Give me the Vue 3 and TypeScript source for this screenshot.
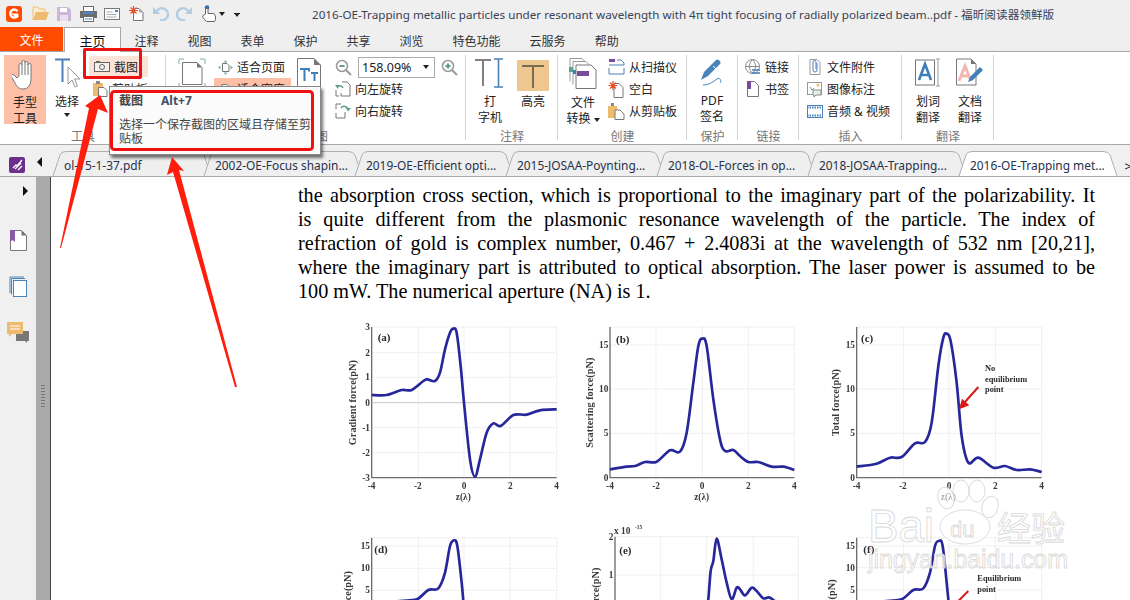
<script setup lang="ts">
type Pt = [number, number]
interface Chart {
  left: number; right: number; top: number; bottom: number
  grid: number[]; hgrid: number[]
  xt: { t: string; x: number }[]; yt: { t: string; y: number }[]
  curve: Pt[]; letter: string; lx: number; ly: number
  yl: string; ylx: number; yly: number; anchor: string
  xl?: { t: string; x: number }
}

function smooth(p: Pt[]): string {
  let d = `M${p[0][0]} ${p[0][1]}`
  for (let i = 0; i < p.length - 1; i++) {
    const a = p[Math.max(i - 1, 0)], b = p[i], c = p[i + 1], e = p[Math.min(i + 2, p.length - 1)]
    const k = 6
    d += ` C${(b[0] + (c[0] - a[0]) / k).toFixed(1)} ${(b[1] + (c[1] - a[1]) / k).toFixed(1)} ${(c[0] - (e[0] - b[0]) / k).toFixed(1)} ${(c[1] - (e[1] - b[1]) / k).toFixed(1)} ${c[0]} ${c[1]}`
  }
  return d
}
const D = 1170
const sh = (p: Pt[]): Pt[] => p.map(([x, y]) => [x + D, y] as Pt)
const xt4 = (l: number, r: number) => {
  const s = (r - l) / 4
  return ['-4', '-2', '0', '2', '4'].map((t, i) => ({ t, x: l + s * i }))
}
const charts: Chart[] = [
  {
    left: 95, right: 650, top: 33, bottom: 485, grid: [235, 372, 510], hgrid: [110, 184, 335, 410],
    xt: xt4(95, 650), yt: [['3', 33], ['2', 110], ['1', 184], ['0', 260], ['-1', 335], ['-2', 410], ['-3', 485]].map(([t, y]) => ({ t: t as string, y: y as number })),
    curve: [[95, 237], [140, 237], [185, 222], [215, 222], [250, 195], [262, 190], [285, 195], [300, 170], [315, 100], [330, 50], [340, 38], [350, 50], [362, 150], [372, 260], [390, 430], [405, 482], [420, 430], [440, 350], [460, 322], [482, 330], [520, 297], [560, 296], [600, 283], [650, 280]],
    letter: '(a)', lx: 113, ly: 76, yl: 'Gradient force(pN)', ylx: 48, yly: 260, anchor: 'middle', xl: { t: 'z(λ)', x: 370 }
  },
  {
    left: 810, right: 1363, top: 33, bottom: 485, grid: [948, 1087, 1225], hgrid: [87, 219, 352],
    xt: xt4(810, 1363), yt: [['15', 87], ['10', 219], ['5', 352], ['0', 485]].map(([t, y]) => ({ t: t as string, y: y as number })),
    curve: [[810, 460], [860, 452], [885, 450], [915, 438], [950, 437], [990, 403], [1020, 407], [1040, 350], [1060, 200], [1075, 90], [1087, 68], [1100, 90], [1120, 250], [1140, 370], [1155, 405], [1180, 402], [1200, 420], [1225, 438], [1255, 438], [1295, 452], [1330, 452], [1363, 462]],
    letter: '(b)', lx: 828, ly: 82, yl: 'Scattering force(pN)', ylx: 760, yly: 260, anchor: 'middle', xl: { t: 'z(λ)', x: 1085 }
  },
  {
    left: 380 + D, right: 935 + D, top: 33, bottom: 485, grid: [520 + D, 657 + D, 796 + D], hgrid: [87, 219, 352],
    xt: xt4(380 + D, 935 + D), yt: [['15', 87], ['10', 219], ['5', 352], ['0', 485]].map(([t, y]) => ({ t: t as string, y: y as number })),
    curve: sh([[380, 452], [440, 443], [480, 425], [515, 423], [555, 382], [585, 378], [605, 320], [625, 150], [640, 65], [650, 53], [662, 75], [680, 200], [695, 360], [715, 440], [745, 425], [790, 455], [825, 450], [860, 462], [900, 460], [935, 468]]),
    letter: '(c)', lx: 393 + D, ly: 78, yl: 'Total force(pN)', ylx: 327 + D, yly: 260, anchor: 'middle', xl: { t: 'z(λ)', x: 655 + D }
  },
  {
    left: 95, right: 650, top: 665, bottom: 1000, grid: [235, 372, 510], hgrid: [690, 757, 823],
    xt: [], yt: [['15', 690], ['10', 757], ['5', 823]].map(([t, y]) => ({ t: t as string, y: y as number })),
    curve: [[95, 862], [180, 855], [230, 850], [265, 822], [295, 817], [315, 770], [330, 690], [342, 673], [352, 690], [365, 800], [372, 880]],
    letter: '(d)', lx: 103, ly: 712, yl: 'force(pN)', ylx: 32, yly: 765, anchor: 'end'
  },
  {
    left: 825, right: 205 + D, top: 662, bottom: 1000, grid: [962, 1100, 70 + D], hgrid: [777],
    xt: [], yt: [['2', 662], ['1', 777]].map(([t, y]) => ({ t: t as string, y: y as number })),
    curve: [[1100, 880], [1105, 850], [1112, 765], [1120, 735], [1130, 668], [1145, 730], [1160, 800], [1175, 850], [1190, 815], [1200, 820], [1215, 838], [1235, 815], [1250, 825], [1270, 847], [1290, 845], [1320, 870]],
    letter: '(e)', lx: 838, ly: 714, yl: 'force(pN)', ylx: 778, yly: 755, anchor: 'end'
  },
  {
    left: 380 + D, right: 935 + D, top: 665, bottom: 1000, grid: [520 + D, 657 + D, 796 + D], hgrid: [690, 755, 822],
    xt: [], yt: [['15', 690], ['10', 755], ['5', 822]].map(([t, y]) => ({ t: t as string, y: y as number })),
    curve: sh([[380, 862], [470, 855], [515, 850], [550, 822], [580, 817], [600, 770], [615, 690], [627, 675], [638, 690], [652, 820], [658, 880]]),
    letter: '(f)', lx: 400 + D, ly: 712, yl: 'force(pN)', ylx: 315 + D, yly: 790, anchor: 'end'
  }
]
const curves = charts.map(c => smooth(c.curve))

const menus = ['注释', '视图', '表单', '保护', '共享', '浏览', '特色功能', '云服务', '帮助']
const tabs = [
  'ol-15-1-37.pdf', '2002-OE-Focus shapin...', '2019-OE-Efficient opti...', '2015-JOSAA-Poynting...',
  '2018-OL-Forces in op...', '2018-JOSAA-Trapping...', '2016-OE-Trapping met...'
]
const lines = [
  'the absorption cross section, which is proportional to the imaginary part of the polarizability. It',
  'is quite different from the plasmonic resonance wavelength of the particle. The index of',
  'refraction of gold is complex number, 0.467 + 2.4083i at the wavelength of 532 nm [20,21],',
  'where the imaginary part is attributed to optical absorption. The laser power is assumed to be',
  '100 mW. The numerical aperture (NA) is 1.'
]
</script>

<template>
  <div class="app">
    <header class="titlebar">
      <div class="quick">
        <svg class="q" style="margin-left:6px" width="16" height="16" viewBox="0 0 16 16"><rect width="16" height="16" rx="3" fill="#ff4a00"/><path d="M11.5 5.2A4 4 0 1 0 11 10.5L8.5 8.6h4" fill="none" stroke="#fff" stroke-width="2.4"/></svg>
        <svg class="q" style="margin-left:10px" width="17" height="15" viewBox="0 0 17 15"><path d="M1 14V1h5l1.500 2H13v3" fill="#fbeccd" stroke="#eec27a"/><path d="M1 14l3-8h13l-3 8z" fill="#eebb6e"/></svg>
        <svg class="q" style="margin-left:8px" width="14" height="14" viewBox="0 0 14 14"><path d="M0 0h11l3 3v11H0z" fill="#cbb5d8"/><rect x="3" y="1" width="7" height="4" fill="#fff"/><rect x="3" y="8" width="8" height="6" fill="#e9e0ef"/></svg>
        <svg class="q" style="margin-left:9px" width="17" height="16" viewBox="0 0 17 16"><rect x="3.500" y=".5" width="10" height="5" fill="#fff" stroke="#6d6d6d"/><rect x="0" y="5" width="17" height="7" fill="#6d6d6d"/><rect x="3" y="6" width="11" height="2" fill="#4a88c7"/><rect x="3.500" y="10.500" width="10" height="5" fill="#fff" stroke="#6d6d6d"/><path d="M5 13h7" stroke="#4a88c7"/></svg>
        <svg class="q" style="margin-left:7px" width="16" height="12" viewBox="0 0 16 12"><rect x=".5" y=".5" width="15" height="11" fill="#fff" stroke="#777"/><rect x="11" y="2" width="3" height="2" fill="#3f7fc0"/><path d="M2.500 4h6M2.500 6.500h10M2.500 9h10" stroke="#aaa"/></svg>
        <svg class="q" style="margin-left:9px" width="15" height="15" viewBox="0 0 15 15"><path d="M5.500 2.500H10l4 4v8H4.500V9" fill="#fff" stroke="#777"/><path d="M10 2.500v4h4" fill="#aaa"/><path d="M4.500 0v9M0 4.500h9M1.500 1.500l6 6M7.500 1.500l-6 6" stroke="#e8502a" stroke-width="1.200"/></svg>
        <svg class="q" style="margin-left:9px" width="16" height="15" viewBox="0 0 16 15"><path d="M4 5A6 6 0 1 1 7 14" fill="none" stroke="#b3cce2" stroke-width="2.400"/><path d="M0 1v7h7z" fill="#b3cce2"/></svg>
        <svg class="q" style="margin-left:7px" width="16" height="15" viewBox="0 0 16 15"><path d="M12 5A6 6 0 1 0 9 14" fill="none" stroke="#b3cce2" stroke-width="2.400"/><path d="M16 1v7H9z" fill="#b3cce2"/></svg>
        <svg class="q" style="margin-left:9px" width="15" height="17" viewBox="0 0 15 17"><circle cx="6" cy="2.500" r="2.300" fill="#2f72b8"/><path d="M4.500 9V3.500h2.500v5h5.500L14.500 11v3.500l-1 2h-8l-4-4.500 1-2z" fill="#fff" stroke="#666"/></svg>
        <span class="caret-d" style="margin-left:3px"></span>
        <span class="more" style="margin-left:9px"></span>
      </div>
      <div class="title">2016-OE-Trapping metallic particles under resonant wavelength with 4π tight focusing of radially polarized beam..pdf - 福昕阅读器领鲜版</div>
    </header>

    <nav class="menubar">
      <div class="file">文件</div>
      <div class="home">主页</div>
      <div v-for="m in menus" :key="m" class="menu">{{ m }}</div>
    </nav>

    <section class="ribbon">
      <div class="group" style="width:166px">
        <div class="body tool">
          <div class="big hand">
            <svg width="26" height="31" viewBox="0 0 26 31"><path d="M7 17V6a1.500 1.500 0 0 1 3 0V3a1.500 1.500 0 0 1 3 0v1a1.500 1.500 0 0 1 3 0v2a1.500 1.500 0 0 1 3 0v13c0 6-2 11-8 11-4 0-6-2-8-6l-4-7c0-2 2-2 3-1l3 3z" fill="#fff" stroke="#777"/><path d="M10 6v10M13 4v12M16 5v11" stroke="#777"/></svg>
            <span class="tx">手型<br>工具</span>
          </div>
          <div class="big sel">
            <svg width="28" height="30" viewBox="0 0 28 30"><path d="M2 1.500h15M9.500 1.500V24" stroke="#4b80b8" stroke-width="2"/><path d="M15 9v17l4-4 3 7 2.500-1-3-7h5.500z" fill="#fff" stroke="#999"/></svg>
            <span class="tx">选择</span>
            <span class="caret-d"></span>
          </div>
          <div class="col" style="margin-left:2px">
            <div class="row shot">
              <svg width="16" height="11" viewBox="0 0 16 11"><rect x=".5" y="1.500" width="15" height="9" fill="#f5f0ec" stroke="#666"/><rect x="2" y="0" width="4" height="2" fill="#666"/><circle cx="8" cy="6" r="2.500" fill="none" stroke="#666"/></svg>
              <span>截图</span>
            </div>
            <div class="row">
              <svg width="15" height="16" viewBox="0 0 15 16"><rect x="0" y="2" width="10" height="13" fill="#eebb6e"/><rect x="3" y="0" width="4" height="3" fill="#888"/><path d="M5.500 6.500H11l3 3v6H5.500z" fill="#fff" stroke="#777"/></svg>
              <span>剪贴板</span>
            </div>
          </div>
        </div>
        <div class="glabel">工具</div>
      </div>

      <div class="group" style="width:300px">
        <div class="body view">
          <div class="big pagefit">
            <svg width="28" height="31" viewBox="0 0 28 31"><path d="M1 6V1h5M22 1h5v5M1 25v5h5M22 30h5v-5" fill="none" stroke="#7fb5a0"/><path d="M4.500 4.500H19l5 5v17H4.500z" fill="#fff" stroke="#777"/><path d="M19 4.500l5 5h-5z" fill="#777"/></svg>
          </div>
          <div class="col" style="margin-left:8px;width:77px">
            <div class="row fit">
              <svg width="15" height="15" viewBox="0 0 15 15"><path d="M7.500 0l2 2.500h-4zM7.500 15l2-2.500h-4zM0 7.500L2.500 5.500v4zM15 7.500L12.500 5.500v4z" fill="#7fb5a0"/><path d="M4.500 3.500H9l2 2v6H4.500z" fill="#fff" stroke="#777"/></svg>
              <span>适合页面</span>
            </div>
            <div class="row fit on">
              <svg width="15" height="15" viewBox="0 0 15 15"><path d="M4 2.500H9l2 2v8H4z" fill="#fff" stroke="#777"/></svg>
              <span>适合宽度</span>
            </div>
            <div class="row fit"><span>适合视区</span></div>
          </div>
          <div class="big tt">
            <svg width="24" height="31" viewBox="0 0 24 31"><path d="M.5.500H17l6.500 6.500v23.500H.5z" fill="#fff" stroke="#777"/><path d="M17 .5L23.500 7H17z" fill="#777"/><path d="M3 11h9v2.500M7.500 11v12M14 15h7M17.500 15v8" fill="none" stroke="#3f7fb8" stroke-width="2"/></svg>
          </div>
          <div class="col zoom">
            <div class="row zoomrow">
              <svg width="17" height="17" viewBox="0 0 17 17"><circle cx="7" cy="7" r="5.500" fill="#fff" stroke="#999" stroke-width="1.500"/><path d="M4.500 7h5" stroke="#5d9d83" stroke-width="2"/><path d="M11 11l5 5" stroke="#999" stroke-width="2"/></svg>
              <div class="combo"><span>158.09%</span><i class="caret-d"></i></div>
              <svg width="17" height="17" viewBox="0 0 17 17"><circle cx="7" cy="7" r="5.500" fill="#fff" stroke="#999" stroke-width="1.500"/><path d="M4.500 7h5M7 4.500v5" stroke="#5d9d83" stroke-width="2"/><path d="M11 11l5 5" stroke="#999" stroke-width="2"/></svg>
            </div>
            <div class="row">
              <svg width="16" height="16" viewBox="0 0 16 16"><path d="M7 1h5l3 3v11H6v-3M1 9v6h3" fill="#fff" stroke="#777"/><path d="M8 7A3.500 3.500 0 0 0 2 6" fill="none" stroke="#5d9d83" stroke-width="1.500"/><path d="M0 4l4 0-1 4z" fill="#5d9d83"/></svg>
              <span>向左旋转</span>
            </div>
            <div class="row">
              <svg width="16" height="16" viewBox="0 0 16 16"><path d="M1 1h5M1 1v5M1 10v5h9V9" fill="none" stroke="#777"/><path d="M6 5A4 4 0 0 1 13 6" fill="none" stroke="#5d9d83" stroke-width="1.500"/><path d="M16 5h-5l2 3.500z" fill="#5d9d83"/></svg>
              <span>向右旋转</span>
            </div>
          </div>
        </div>
        <div class="glabel">视图</div>
      </div>

      <div class="group" style="width:92px">
        <div class="body note">
          <div class="big" style="width:38px">
            <svg width="30" height="30" viewBox="0 0 30 30"><path d="M0 2h16M8 2v26" stroke="#808080" stroke-width="2" fill="none"/><path d="M19 1h9M19 29h9M23.500 1v28" stroke="#4b80b8" stroke-width="1.600"/></svg>
            <span class="tx">打<br>字机</span>
          </div>
          <div class="big high">
            <div class="hibox"><svg width="24" height="24" viewBox="0 0 24 24"><path d="M1 2h22M12 2v22" stroke="#7a6a50" stroke-width="2"/></svg></div>
            <span class="tx">高亮</span>
          </div>
        </div>
        <div class="glabel">注释</div>
      </div>

      <div class="group" style="width:129px">
        <div class="body">
          <div class="big" style="width:44px;margin-left:3px">
            <svg width="28" height="31" viewBox="0 0 28 31"><path d="M1 .5h12l3 3M4 3.500h13l3 3" fill="none" stroke="#999"/><path d="M1 .5v23M4 3.500v23" stroke="#999"/><path d="M7 7h15l5 5v18.500H7z" fill="#fff" stroke="#777"/><rect x="0" y="9" width="4" height="5" fill="#5fa08a"/><rect x="4" y="12" width="3" height="4" fill="#3f7fb8"/><rect x="8" y="13" width="12" height="5" fill="#7a4b9d"/></svg>
            <span class="tx">文件<br>转换 <i class="caret-d inl"></i></span>
          </div>
          <div class="col" style="margin-left:3px">
            <div class="row">
              <svg width="17" height="17" viewBox="0 0 17 17"><rect x="1" y="0" width="6" height="3" fill="#7a4b9d"/><path d="M9 1h4l3 3v2M1 6h15M1 9v6h15V9" fill="none" stroke="#4b80b8"/></svg>
              <span>从扫描仪</span>
            </div>
            <div class="row">
              <svg width="17" height="17" viewBox="0 0 17 17"><path d="M6 2.500h5l4 4v10H6z" fill="#fff" stroke="#777"/><path d="M5 0v9M.5 4.500h9M2 1.500l6 6M8 1.500l-6 6" stroke="#e8502a" stroke-width="1.200"/></svg>
              <span>空白</span>
            </div>
            <div class="row">
              <svg width="17" height="17" viewBox="0 0 17 17"><rect x="0" y="3" width="9" height="12" fill="#eebb6e"/><rect x="3" y="0" width="3" height="3" fill="#888"/><path d="M7 7h5l4 4v5.500H7z" fill="#fff" stroke="#777"/></svg>
              <span>从剪贴板</span>
            </div>
          </div>
        </div>
        <div class="glabel">创建</div>
      </div>

      <div class="group" style="width:51px">
        <div class="body">
          <div class="big" style="width:50px">
            <svg width="26" height="29" viewBox="0 0 26 29"><path d="M2 22l3-8L17 2c2-2 6 2 4 4L9 18z" fill="#4b84bd"/><path d="M4 27c6 0 10-3 14-6 3-2 5 2 3 4" fill="none" stroke="#4b84bd"/><path d="M14 8l4 4" stroke="#fff"/></svg>
            <span class="tx">PDF<br>签名</span>
          </div>
        </div>
        <div class="glabel">保护</div>
      </div>

      <div class="group" style="width:61px">
        <div class="body">
          <div class="col" style="margin-left:7px">
            <div class="row">
              <svg width="16" height="16" viewBox="0 0 16 16"><circle cx="7.500" cy="7.500" r="7" fill="#fff" stroke="#888"/><path d="M.5 7.500h14M7.500.5c-4 4-4 10 0 14M7.500.5c4 4 4 10 0 14" fill="none" stroke="#888"/><path d="M7 11h8M7 14h8" stroke="#3f7fb8" stroke-width="1.600"/></svg>
              <span>链接</span>
            </div>
            <div class="row">
              <svg width="16" height="16" viewBox="0 0 16 16"><path d="M2.500.5h7l4 4v11h-11z" fill="#fff" stroke="#777"/><rect x="2" y="0" width="4" height="8" fill="#7a4b9d"/></svg>
              <span>书签</span>
            </div>
          </div>
        </div>
        <div class="glabel">链接</div>
      </div>

      <div class="group" style="width:103px">
        <div class="body">
          <div class="col" style="margin-left:8px">
            <div class="row">
              <svg width="16" height="16" viewBox="0 0 16 16"><path d="M3 .5h7l3 3v12H3z" fill="#fff" stroke="#999"/><path d="M10 4v7a2 2 0 0 1-4 0V3a1.500 1.500 0 0 1 3 0v7" fill="none" stroke="#4b80b8"/></svg>
              <span>文件附件</span>
            </div>
            <div class="row">
              <svg width="16" height="16" viewBox="0 0 16 16"><rect x=".5" y="1.500" width="14" height="12" fill="#fff" stroke="#999"/><path d="M3 6l2 3 2-2" stroke="#5fa08a" fill="none"/><path d="M6 9h8v5H9l-2 2v-2H6z" fill="#e6f0e6" stroke="#888"/><circle cx="11" cy="4" r="1.500" fill="#eebb6e"/></svg>
              <span>图像标注</span>
            </div>
            <div class="row">
              <svg width="16" height="13" viewBox="0 0 16 13"><rect x=".5" y=".5" width="15" height="12" fill="#fff" stroke="#4b80b8"/><path d="M0 2.500h16M0 10.500h16" stroke="#4b80b8" stroke-width="2" stroke-dasharray="1.500 1"/></svg>
              <span>音频 &amp; 视频</span>
            </div>
          </div>
        </div>
        <div class="glabel">插入</div>
      </div>

      <div class="group" style="width:92px">
        <div class="body">
          <div class="big" style="width:42px;margin-left:5px">
            <svg width="26" height="30" viewBox="0 0 26 30"><rect x=".5" y="2" width="19" height="25" fill="#fff" stroke="#777"/><path d="M21 1h4M21 28h4M23 1v27" stroke="#999"/><path d="M4 22l6-16 6 16M6 17h8" fill="none" stroke="#3f7fb8" stroke-width="2.600"/></svg>
            <span class="tx">划词<br>翻译</span>
          </div>
          <div class="big" style="width:42px">
            <svg width="28" height="30" viewBox="0 0 28 30"><path d="M.5 1H15l5 5v21H.5z" fill="#fff" stroke="#777"/><path d="M15 1l5 5h-5z" fill="#777"/><path d="M3 23l6-15 6 15M5 18h8" fill="none" stroke="#f2b8b0" stroke-width="3"/><path d="M12 24l2-5 10-10 3 3-10 10z" fill="#3f7fb8"/></svg>
            <span class="tx">文档<br>翻译</span>
          </div>
        </div>
        <div class="glabel">翻译</div>
      </div>
    </section>

    <div class="strip">
      <svg class="stripicon" width="16" height="16" viewBox="0 0 16 16"><rect width="16" height="16" rx="2" fill="#6b2f8c"/><path d="M4 11l3-3 1 1 5-6M6 12l6-6M9 13l4-4" stroke="#fff" stroke-width="1.300" fill="none"/></svg>
      <span class="tri-l"></span>
      <div class="tabs">
        <div v-for="(t, i) in tabs" :key="t" class="tab" :class="{ active: i === tabs.length - 1 }">
          <svg class="tabshape" width="158" height="25" viewBox="0 0 158 25"><path d="M0 25L7 4Q8 .5 13 .5H144Q149 .5 151 4L158 25" /></svg>
          <span class="tabtext">{{ t }}</span>
        </div>
      </div>
      <span class="next">&gt;</span>
    </div>

    <main class="work">
      <aside class="side">
        <span class="tri-r"></span>
        <svg style="margin-top:34px" width="18" height="21" viewBox="0 0 18 21"><path d="M1.500.5h11l5 5v15h-16z" fill="#fff" stroke="#777"/><path d="M12.500.5l5 5h-5z" fill="#777"/><path d="M1 0h5v12L3.500 10 1 12z" fill="#8a5aa8"/></svg>
        <svg style="margin-top:25px" width="18" height="21" viewBox="0 0 18 21"><path d="M1 17V1h14M2.500 18.500V2.500H16" fill="none" stroke="#4b84bd"/><rect x="4.500" y="4.500" width="13" height="16" fill="#fff" stroke="#4b84bd"/></svg>
        <svg style="margin-top:25px" width="22" height="22" viewBox="0 0 22 22"><path d="M9 9h13v10h-2v2l-2-2H9z" fill="#777"/><path d="M0 0h16v12H5l-3 3v-3H0z" fill="#eebb6e"/><path d="M3 4h10M3 7h10" stroke="#fff"/></svg>
      </aside>
      <div class="splitter"><span class="grip"></span></div>
      <article class="page">
        <div class="para">
          <div v-for="(l, i) in lines" :key="i" class="line" :class="{ last: i === lines.length - 1 }">{{ l }}</div>
        </div>
        <svg class="figure" width="720" height="285" viewBox="0 0 2160 855">
          <g v-for="(c, i) in charts" :key="c.letter">
            <path v-for="x in c.grid" :key="'g' + x" :d="`M${x} ${c.top}V${c.bottom}`" class="grid" />
            <path v-for="y in c.hgrid" :key="'h' + y" :d="`M${c.left} ${y}H${c.right}`" class="grid" />
            <path :d="`M${c.left} ${c.top}H${c.right}V${c.bottom}`" class="grid" />
            <path :d="`M${c.left} ${c.top}V${c.bottom}H${c.right}`" class="axis" />
            <path v-if="i === 0" d="M95 260H650" class="zero" />
            <text v-for="t in c.xt" :key="'x' + t.x" :x="t.x" y="520" class="tick" text-anchor="middle">{{ t.t }}</text>
            <text v-for="t in c.yt" :key="'y' + t.y" :x="c.left - 5" :y="t.y + 9" class="tick" text-anchor="end">{{ t.t }}</text>
            <text v-if="c.xl" :x="c.xl.x" y="553" class="tick" text-anchor="middle">{{ c.xl.t }}</text>
            <text :transform="`translate(${c.ylx} ${c.yly}) rotate(-90)`" class="tick yl" :text-anchor="c.anchor">{{ c.yl }}</text>
            <text :x="c.lx" :y="c.ly" class="tick letter">{{ c.letter }}</text>
            <path :d="curves[i]" class="curve" />
          </g>
          <text x="822" y="655" class="tick">x 10</text>
          <text x="885" y="640" class="tick small">-15</text>
          <text x="1935" y="165" class="tick note2">No</text>
          <text x="1935" y="197" class="tick note2">equilibrium</text>
          <text x="1935" y="229" class="tick note2">point</text>
          <path d="M1915 213L1875 258" class="redline" /><path d="M1857 280L1866 248L1888 268z" fill="#d61a1a" />
          <text x="1912" y="796" class="tick note2">Equilibrium</text>
          <text x="1912" y="828" class="tick note2">point</text>
          <path d="M1885 825L1850 860" class="redline" />
        </svg>
      </article>
    </main>

    <div class="tooltip">
      <div class="tiphead"><b>截图</b><b class="alt">Alt+7</b></div>
      <div class="tipdesc">选择一个保存截图的区域且存储至剪贴板</div>
    </div>
    <div class="redbox"></div>

    <svg class="overlay" width="1130" height="600" viewBox="0 0 1130 600">
      <rect x="111.500" y="91.500" width="201" height="58" rx="3" class="mark" />
      <polygon points="100,95 108,113 98,109 61,248 60,248 89,108 85,106" fill="#ff1d0c" />
      <polygon points="172,157 184,171 179,170 237,387 235,387 173,172 167,175" fill="#ff1d0c" />
      <g class="wm">
        <ellipse cx="946" cy="498" rx="8" ry="11" transform="rotate(-15 946 498)" />
        <ellipse cx="961" cy="491" rx="8" ry="11" />
        <ellipse cx="977" cy="491" rx="8" ry="11" />
        <ellipse cx="990" cy="507" rx="8" ry="11" transform="rotate(15 990 507)" />
        <ellipse cx="965" cy="527" rx="25" ry="17" />
        <text x="868" y="542" font-size="46" textLength="66">Bai</text>
        <text x="950" y="537" font-size="22">du</text>
        <text x="997" y="541" font-size="34" class="cjk">经验</text>
        <text x="868" y="568" font-size="25" textLength="200">jingyan.baidu.com</text>
      </g>
    </svg>
  </div>
</template>

<style scoped>
.app {
  position: relative;
  width: 1130px;
  height: 600px;
  overflow: hidden;
  display: flex;
  flex-direction: column;
  background: #fff;
  font-family: "Noto Sans", "Noto Sans CJK SC", sans-serif;
  font-size: 12px;
  color: #222;
}
.titlebar {
  height: 27px;
  background: #efefef;
  display: flex;
  align-items: center;
  flex: none;
}
.quick { width: 312px; display: flex; align-items: center; flex: none; }
.q { flex: none; }
.title { font-size: 11.650px; color: #3a4256; white-space: nowrap; }
.caret-d {
  display: inline-block;
  width: 0; height: 0;
  border-left: 3px solid transparent;
  border-right: 3px solid transparent;
  border-top: 4px solid #222;
}
.caret-d.inl { vertical-align: middle; }
.more { display: inline-block; width: 6px; height: 1px; background: #222; }
.more::after { content: ""; display: block; padding-top: 3px; width: 0; height: 0; border-left: 3px solid transparent; border-right: 3px solid transparent; border-top: 4px solid #222; }
.menubar {
  height: 25px;
  flex: none;
  background: #efefef;
  border-bottom: 1px solid #a8a8a8;
  display: flex;
  box-sizing: border-box;
  position: relative;
}
.file {
  width: 63px;
  height: 24px;
  background: #ff4b00;
  color: #fff;
  text-align: center;
  line-height: 28px;
  flex: none;
  overflow: hidden;
}
.home {
  width: 57px;
  height: 25px;
  margin: 0 -1px 0 1px;
  background: #fff;
  border: 1px solid #a8a8a8;
  border-bottom: none;
  box-sizing: border-box;
  text-align: center;
  font-size: 13px;
  line-height: 27px;
  color: #111;
  flex: none;
  overflow: hidden;
}
.menu { padding: 0 14.500px; line-height: 29px; height: 24px; color: #333; flex: none; }
.ribbon {
  height: 93px;
  flex: none;
  background: #fff;
  border-bottom: 1px solid #a8a8a8;
  display: flex;
  box-sizing: border-box;
}
.group {
  flex: none;
  box-sizing: border-box;
  display: flex;
  flex-direction: column;
  position: relative;
  padding-top: 4px;
}
.group::after {
  content: "";
  position: absolute;
  right: 0; top: 3px; bottom: 4px;
  width: 1px;
  background: #d4d4d4;
}
.body { flex: 1; display: flex; min-height: 0; }
.glabel { height: 18px; line-height: 22px; text-align: center; color: #777; }
.big { display: flex; flex-direction: column; align-items: center; padding-top: 2px; box-sizing: border-box; flex: none; }
.big svg { flex: none; }
.tx { margin-top: 6px; text-align: center; line-height: 16px; color: #222; }
.hand { width: 42px; height: 69px; margin-left: 4px; margin-top: -1px; background: #fdbfa6; padding-top: 4px; }
.hand .tx { margin-top: 5px; }
.sel { width: 34px; margin-left: 4px; }
.sel .tx { margin-top: 6px; }
.sel .caret-d { margin-top: 3px; }
.col { display: flex; flex-direction: column; flex: none; }
.row { height: 22px; display: flex; align-items: center; gap: 4px; white-space: nowrap; color: #222; }
.row svg { flex: none; }
.shot { background: #fce3d8; height: 21px; padding: 0 3px 0 5px; margin-left: 3px; }
.shot span, .fit span { color: #222; }
.shot + .row { padding-left: 7px; margin-top: 1px; }
.view .pagefit { width: 28px; margin-left: 12px; }
.fit { padding-left: 4px; }
.fit.on { background: #fdbfa6; }
.tt { margin-left: 6px; width: 24px; }
.zoom { margin-left: 14px; }
.zoomrow { gap: 6px; }
.combo {
  width: 77px; height: 21px;
  border: 1px solid #aaa;
  box-sizing: border-box;
  display: flex;
  align-items: center;
  justify-content: space-between;
  padding: 0 5px 0 3px;
  font-size: 12.500px;
}
.note { padding-left: 5px; }
.high { width: 36px; margin-left: 6px; padding-top: 4px; }
.hibox { width: 32px; height: 31px; background: #edc78e; display: flex; align-items: center; justify-content: center; }
.high .tx { margin-top: 3px; }
.strip {
  height: 32px;
  flex: none;
  background: #f0f0f0;
  border-bottom: 1px solid #a8a8a8;
  box-sizing: border-box;
  display: flex;
  align-items: flex-end;
  position: relative;
}
.stripicon { margin: 0 0 3px 9px; flex: none; }
.tri-l { width: 0; height: 0; border-top: 5px solid transparent; border-bottom: 5px solid transparent; border-right: 5px solid #111; margin: 0 0 9px 12px; flex: none; }
.tabs { display: flex; margin-left: 11px; flex: none; }
.tab { position: relative; width: 151px; height: 24px; flex: none; }
.tabshape { position: absolute; left: 0; top: -1px; overflow: visible; }
.tabshape path { fill: #efefef; stroke: #b0b0b0; }
.tab.active { z-index: 2; }
.tab.active .tabshape path { fill: #fff; }
.tabtext { position: relative; display: block; padding-left: 11px; line-height: 27px; color: #27314a; white-space: nowrap; font-size: 11.900px; }
.next { position: absolute; right: -2px; top: 12px; color: #111; font-size: 13px; z-index: 3; }
.work { flex: 1; display: flex; min-height: 0; }
.side {
  width: 36px;
  flex: none;
  background: #f0f0f0;
  display: flex;
  flex-direction: column;
  align-items: center;
  box-sizing: border-box;
  padding-top: 9px;
}
.tri-r { width: 0; height: 0; border-top: 5px solid transparent; border-bottom: 5px solid transparent; border-left: 5px solid #111; margin-left: 15px; }
.splitter {
  width: 15px;
  flex: none;
  background: #aaa;
  border-right: 1px solid #444;
  box-sizing: border-box;
  display: flex;
  justify-content: center;
  padding-top: 207px;
}
.grip { width: 4px; height: 24px; background-image: radial-gradient(#777 40%, transparent 45%); background-size: 2px 3px; }
.page { flex: 1; min-width: 0; overflow: hidden; background: #fff; padding: 6px 0 0 247px; box-sizing: border-box; }
.para { width: 797px; font-family: "Liberation Serif", serif; font-size: 20.200px; line-height: 24px; color: #000; }
.line { text-align: justify; text-align-last: justify; }
.line.last { text-align-last: left; }
.figure { display: block; margin: 13px 0 0 42px; overflow: hidden; filter: blur(.5px); }
.grid { fill: none; stroke: #d2d2d2; stroke-width: 2; stroke-dasharray: 2 2; }
.axis { fill: none; stroke: #6d6d6d; stroke-width: 4; }
.zero { stroke: #aaa; stroke-width: 2; }
.curve { fill: none; stroke: #27279b; stroke-width: 8; stroke-linejoin: round; }
.tick { font-family: "Liberation Serif", serif; font-weight: bold; font-size: 28px; fill: #3a3a3a; }
.yl { font-size: 31px; }
.letter { font-size: 33px; fill: #2a2a2a; }
.small { font-size: 16px; }
.note2 { font-size: 25px; fill: #2a2a2a; }
.redline { stroke: #d61a1a; stroke-width: 6; fill: none; }
.tooltip {
  position: absolute;
  left: 109px; top: 86px;
  width: 212px; height: 69px;
  box-sizing: border-box;
  background: #fbfbfb;
  border: 1px solid #888;
  box-shadow: 2px 3px 3px rgba(0, 0, 0, .55);
  padding: 6px 8px 0 9px;
  color: #444;
  z-index: 5;
}
.tiphead { display: flex; gap: 18px; line-height: 16px; }
.alt { color: #3e5068; }
.tipdesc { margin-top: 9px; line-height: 14px; }
.redbox {
  position: absolute;
  left: 83px; top: 48px;
  width: 59px; height: 31px;
  box-sizing: border-box;
  border: 3px solid #ee1111;
  border-radius: 2px;
  z-index: 6;
}
.overlay { position: absolute; left: 0; top: 0; z-index: 7; pointer-events: none; }
.mark { fill: none; stroke: #f01010; stroke-width: 3; }
.wm ellipse { fill: rgba(255, 255, 255, .6); stroke: #dcdcdc; stroke-width: 1; }
.wm text { font-family: "Liberation Sans", sans-serif; fill: rgba(255, 255, 255, .75); stroke: #d8d8d8; stroke-width: .8; }
.wm .cjk { font-family: "Noto Sans CJK SC", sans-serif; }
</style>
